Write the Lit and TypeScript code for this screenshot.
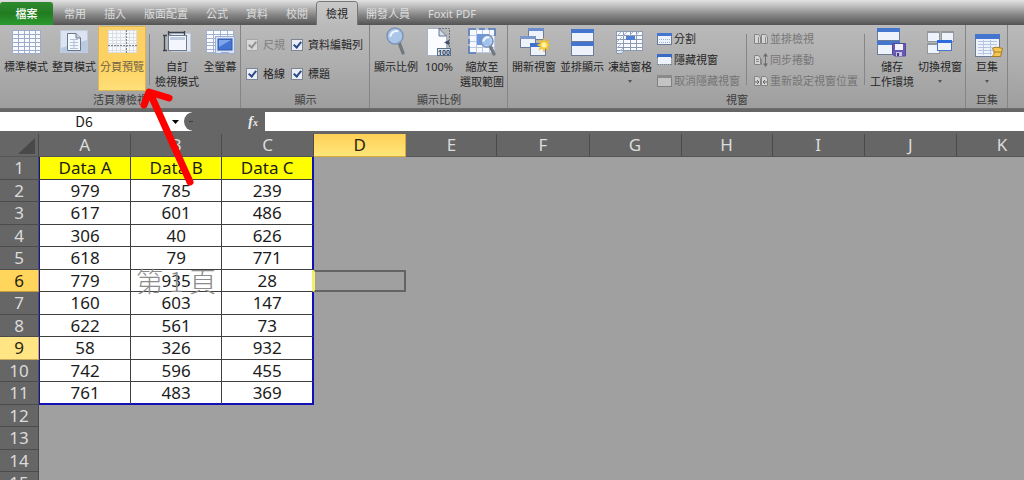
import { LitElement, html, svg, css, nothing } from "lit";
import { customElement, property, state } from "lit/decorators.js";
import { classMap } from "lit/directives/class-map.js";

// ---------- icon drawing helpers ----------

const win = (x: number, y: number, w: number, h: number, bar = 3, tone = "#3f72cf", line = "#6c7c96") => svg`
  <rect x=${x + 0.5} y=${y + 0.5} width=${w - 1} height=${h - 1} fill="#eef2fa" stroke=${line}></rect>
  <rect x=${x} y=${y} width=${w} height=${bar} fill=${tone}></rect>`;

const grid = (x: number, y: number, w: number, h: number, cols: number, rows: number, tone = "#7f93b4") => svg`
  <rect x=${x + 0.5} y=${y + 0.5} width=${w - 1} height=${h - 1} fill="#f8faff" stroke=${tone}></rect>
  ${Array.from({ length: cols - 1 }, (_, i) => {
    const p = Math.round(x + ((i + 1) * w) / cols) + 0.5;
    return svg`<path d="M${p} ${y}V${y + h}" stroke=${tone}></path>`;
  })}
  ${Array.from({ length: rows - 1 }, (_, i) => {
    const p = Math.round(y + ((i + 1) * h) / rows) + 0.5;
    return svg`<path d="M${x} ${p}H${x + w}" stroke=${tone}></path>`;
  })}`;

const lens = (cx: number, cy: number, r: number, ex: number, ey: number) => svg`
  <path d="M${cx + r * 0.5} ${cy + r * 0.8}L${ex} ${ey}" stroke="#74787f" stroke-width="3.4" stroke-linecap="round"></path>
  <circle cx=${cx} cy=${cy} r=${r} fill="#a9c9ee" fill-opacity=".85" stroke="#7c93b8" stroke-width="1.5"></circle>
  <path d="M${cx - r * 0.6} ${cy + r * 0.1}Q${cx - r * 0.4} ${cy - r * 0.7} ${cx + r * 0.4} ${cy - r * 0.6}" stroke="#eef6ff" stroke-width="2" fill="none"></path>`;

const bigIcons: Record<string, unknown> = {
  normal: svg`${grid(1, 2, 29, 24, 5, 6, "#9dadc8")}`,
  layout: svg`
    <rect x="1.500" y="2.500" width="27" height="22" fill="#dbe4f0" stroke="#c3ccda"></rect>
    <path d="M2 20L28 12V24H2Z" fill="#b9cbe2"></path>
    <path d="M8.500 5.500H17L21.500 10V22.500H8.500Z" fill="#f2f6fd" stroke="#6b7688"></path>
    <path d="M17 5.500V10H21.500" fill="#ccd8ea" stroke="#6b7688"></path>
    <path d="M11 11.500H19M11 14.500H19M11 17.500H19M11 20.500H19M15 11V21" stroke="#b3c1d8"></path>`,
  pagebreak: svg`${grid(1, 2, 29, 23, 7, 7, "#dcdfe2")}
    <path d="M19.500 2V25M1 17.500H30" stroke="#7d828a" stroke-dasharray="2 1"></path>`,
  custom: svg`
    <rect x="9.500" y="5.500" width="19" height="18" fill="#e3eaf5" stroke="#c2ccdc"></rect>
    <rect x="6.500" y="7.500" width="18" height="15" fill="#f3f6fc" stroke="#6f7a8f"></rect>
    <rect x="8" y="9" width="15" height="3" fill="#c0cce0"></rect>
    <path d="M6 4.500H23M6.500 3V7M22.500 3V7M2.500 7V22M1 7.500H5M1 22.500H5" stroke="#3c424c" stroke-width="1.300" fill="none"></path>`,
  full: svg`${grid(1, 2, 28, 23, 4, 6, "#a3b2cc")}
    <rect x="10.500" y="8.500" width="19" height="17" fill="#d7e3f7" stroke="#9badd0"></rect>
    <rect x="13" y="11" width="14" height="11" fill="#4474d2" stroke="#3159a8"></rect>
    <path d="M14 12H26L14 19Z" fill="#7fa6ec"></path><path d="M16 24.500H24" stroke="#9badd0"></path>`,
  zoom: svg`${lens(14, 8, 8, 22, 25)}`,
  hundred: svg`
    <path d="M3.500 .5H15L22.500 8V27.500H3.500Z" fill="#fbfcff" stroke="#a6b2c8"></path>
    <path d="M15 .5V8H22.500Z" fill="#d3dcea" stroke="#6c788f"></path>
    <path d="M15 .5H25.500V20" stroke="#6a7384" stroke-dasharray="2 1" fill="none"></path>
    <path d="M20 14.500L25 12V17Z" fill="#41506c"></path>
    <rect x="13.500" y="20.500" width="13" height="7" fill="#d6e3ef" stroke="#5b7089"></rect>
    <text x="20" y="27" text-anchor="middle" font-size="7" font-weight="700" fill="#33445c">100</text>`,
  zoomsel: svg`${grid(2, 1, 26, 24, 4, 4, "#b9c8e2")}
    <path d="M2 8V1H9M21 1H28V8M2 18V25H9M12 1H18M2 11V16" stroke="#5478b8" stroke-width="1.500" fill="none"></path>
    <rect x="10" y="6" width="12" height="11" fill="#6b96e2"></rect>
    ${lens(20, 13, 6, 27, 26)}`,
  newwin: svg`${win(9, 0, 16, 12, 3, "#6b8ccc")}${win(1, 8, 16, 12, 3, "#7c98cb")}${win(11, 15, 16, 13, 4, "#3f70cc")}
    <path d="M25 10L26.500 14L30 12L28.500 15.500L31 17L28.500 18.500L30 22L26.500 20L25 24L23.500 20L20 22L21.500 18.500L18 17L21.500 15.500L20 12L23.500 14Z" fill="#ffd23c" stroke="#e8b11c" stroke-width=".6"></path>
    <circle cx="25" cy="17" r="2.500" fill="#fff3a8"></circle>`,
  arrange: svg`${win(4, 1, 23, 13, 4, "#4476d0")}${win(4, 14, 23, 14, 4, "#4476d0")}`,
  freeze: svg`${grid(1, 3, 27, 20, 4, 5, "#8d9bb2")}
    <rect x="11" y="8" width="9" height="4" fill="#4f7ed2"></rect>
    <path d="M2 8L6 4M8 8L12 4M14 8L18 4M20 8L24 4M2 14L7 9M2 20L7 15M3 25L8 20" stroke="#a3b8dc"></path>
    <path d="M1.500 23V25.500H7L9 23" fill="#dbe5f4" stroke="#8d9bb2"></path>`,
  save: svg`${win(0, 0, 23, 13, 4, "#4476d0")}${win(0, 13, 23, 14, 4, "#4476d0")}
    <path d="M15.500 15.500H28.500V28H17.500L15.500 26Z" fill="#6a58b4" stroke="#54479a"></path>
    <rect x="18" y="16" width="8" height="6" fill="#f2f2fa"></rect>
    <rect x="19" y="24" width="6" height="4" fill="#c8c4e2"></rect><rect x="20" y="25" width="2" height="3" fill="#453789"></rect>`,
  switchwin: svg`${win(2, 3, 13, 11, 2, "#94979c", "#94979c")}${win(16, 3, 13, 11, 2, "#94979c", "#94979c")}
    ${win(2, 15, 13, 11, 2, "#94979c", "#94979c")}${win(12, 12, 15, 11, 3, "#2f6ade", "#4a75c4")}`,
  macro: svg`${win(3, 6, 25, 23, 5, "#4476d0")}
    <path d="M6 13.500H25M6 16.500H25M6 19.500H25M6 22.500H25M6 25.500H20M11.500 12V27M18.500 12V27" stroke="#b6c6e2"></path>
    <path d="M20.500 20.500Q23 18 30.500 20.500L28.500 28.500H20Q23 27 22 23Z" fill="#f5c755" stroke="#a87b1f"></path>
    <path d="M22 24H29" stroke="#a87b1f"></path>`,
};

const page = (x: number) => svg`<path d="M${x} 3.500H${x + 4}L${x + 6} 6V12.500H${x}Z" fill="#d5d5d5" stroke="#858585"></path>`;

const smallIcons: Record<string, unknown> = {
  split: svg`${win(0, 2, 15, 12, 3, "#4476d0")}<path d="M2 8.500H13M2 11.500H13" stroke="#9bb4de" stroke-dasharray="1 1"></path>`,
  hide: svg`<rect x="0" y="2" width="15" height="4" fill="#3a69c4"></rect><rect x="1" y="5" width="13" height="7" fill="#eef2fb"></rect>
    <path d="M.5 6V14M14.500 6V14M1 12.500H14" stroke="#7a879d" stroke-dasharray="1 1"></path>`,
  unhide: svg`${win(0, 2, 15, 12, 3, "#8a8a8a", "#808080")}<rect x="1" y="5" width="13" height="8" fill="#c3c3c3"></rect>`,
  side: svg`${page(1.5)}${page(8.5)}<path d="M5.500 6V12M12.500 6V12" stroke="#888"></path>`,
  sync: svg`${page(1.5)}<path d="M3 7.500H6M3 9.500H6M8.500 7V13" stroke="#888"></path>
    <path d="M12.500 1L15 4.500H10ZM12.500 15L15 11.500H10Z" fill="#6c6c6c"></path><path d="M12.500 4V12" stroke="#6c6c6c"></path>`,
  reset: svg`${page(1.5)}${page(8.5)}<path d="M2 9H6M4 7L6 9L4 11M14 9H10M12 7L10 9L12 11" stroke="#666" fill="none"></path>`,
};

// ---------- ribbon buttons ----------

@customElement("ribbon-button")
class RibbonButton extends LitElement {
  @property() icon = "";
  @property({ type: Array }) lines: string[] = [];
  @property({ type: Boolean }) menu = false;
  @property({ type: Boolean }) active = false;
  @property({ type: Boolean }) narrow = false;

  static styles = css`
    :host { display: block; }
    button {
      display: flex; flex-direction: column; align-items: center;
      box-sizing: border-box; width: 48px; height: 65px; padding: 2px 0 0;
      border: 0; background: none; color: #262626;
      font: 11px/15px "Noto Sans", "Noto Sans CJK TC", sans-serif; white-space: nowrap;
    }
    button.narrow { width: 38px; }
    button.active {
      background: linear-gradient(#fad068, #fdd262 60%, #ffe07a);
      box-shadow: inset 0 0 0 1px #dfb552; color: #6f6446;
    }
    svg { width: 30px; height: 28px; margin-bottom: 3px; overflow: visible; flex: none; }
    .caret { width: 0; margin-top: 6px; border: 2px solid transparent; border-top: 3px solid #555; border-bottom: 0; }
  `;

  render() {
    return html`<button type="button" class=${classMap({ active: this.active, narrow: this.narrow })} aria-pressed=${this.active}>
      <svg viewBox="0 0 30 28" fill="none" aria-hidden="true">${bigIcons[this.icon]}</svg>
      ${this.lines.map((l) => html`<span>${l}</span>`)}
      ${this.menu ? html`<span class="caret"></span>` : nothing}
    </button>`;
  }
}

@customElement("ribbon-item")
class RibbonItem extends LitElement {
  @property() icon = "";
  @property() label = "";
  @property({ type: Boolean }) off = false;

  static styles = css`
    :host { display: block; }
    button {
      display: flex; align-items: center; gap: 2px; height: 21px; padding: 0 3px;
      border: 0; background: none; color: #262626;
      font: 11px/15px "Noto Sans", "Noto Sans CJK TC", sans-serif; white-space: nowrap;
    }
    button:disabled { color: #757575; }
    svg { width: 15px; height: 16px; flex: none; }
  `;

  render() {
    return html`<button type="button" ?disabled=${this.off}>
      <svg viewBox="0 0 15 16" fill="none" aria-hidden="true">${smallIcons[this.icon]}</svg>${this.label}
    </button>`;
  }
}

// ---------- worksheet ----------

const columns = ["A", "B", "C", "D", "E", "F", "G", "H", "I", "J", "K"];
const data: (string | number)[][] = [
  ["Data A", "Data B", "Data C"],
  [979, 785, 239],
  [617, 601, 486],
  [306, 40, 626],
  [618, 79, 771],
  [779, 935, 28],
  [160, 603, 147],
  [622, 561, 73],
  [58, 326, 932],
  [742, 596, 455],
  [761, 483, 369],
];

@customElement("work-sheet")
class WorkSheet extends LitElement {
  static styles = css`
    :host { display: block; overflow: hidden; background: #a0a0a0; }
    table {
      width: 1048px; table-layout: fixed; border-collapse: separate; border-spacing: 0;
      font: 17px/20px "Noto Sans", "Noto Sans CJK TC", sans-serif; color: #1c1c1c; text-align: center;
    }
    col { width: 92px; }
    col:nth-child(3n) { width: 91px; }
    col.rows { width: 39px; }
    tr { height: 23px; }
    tbody tr:nth-child(even) { height: 22px; }
    th, td { box-sizing: border-box; height: inherit; padding: 0; }
    th { background: #666; color: #dcdcdc; font-weight: 400; border: 0 solid #4b4b4b; border-width: 0 1px 1px 0; }
    thead th { border-bottom-color: #555; }
    thead th.picked { background: linear-gradient(#ffd058, #ffe679); color: #2b2410; border-color: #d8a93c; }
    tbody th.picked { background: #ffd55c; color: #2b2410; border-color: #c49a39; }
    tbody th.near { background: #ffe583; color: #2b2410; border-color: #c4a95a; }
    .corner svg { display: block; width: 18px; height: 16px; margin: 2px 2px 0 auto; }
    .cell { background: #fff; border: 0 solid #3f3f3f; border-width: 0 1px 1px 0; }
    .title { background: #ff0; }
    .first { border-left: 1px solid #1515a8; }
    .last { border-right: 2px solid #1010b4; }
    .bottom { border-bottom: 2px solid #1010b4; }
    .beside { border-right-color: #f4f06a; }
    .selected { border: 2px solid #646464; border-left: 1px solid #f4f06a; }
    .marked { position: relative; }
    .mark {
      position: absolute; inset: 0; display: flex; align-items: center; justify-content: center;
      font: 200 27px/27px "Noto Sans CJK TC", sans-serif; color: #8c8c8c; white-space: nowrap;
    }
  `;

  private cell(r: number, c: number) {
    if (r < data.length && c < 3) {
      const cls = classMap({
        cell: true, title: r === 0, first: c === 0, last: c === 2,
        bottom: r === data.length - 1, beside: r === 5 && c === 2, marked: r === 5 && c === 1,
      });
      return html`<td class=${cls}>${data[r][c]}${r === 5 && c === 1 ? html`<span class="mark">第 1 頁</span>` : nothing}</td>`;
    }
    return html`<td class=${classMap({ selected: r === 5 && c === 3 })}></td>`;
  }

  render() {
    return html`<table>
      <colgroup><col class="rows" />${columns.map(() => html`<col />`)}</colgroup>
      <thead><tr>
        <th class="corner"><svg viewBox="0 0 18 16" aria-hidden="true"><path d="M17 0V16H0Z" fill="#494949"></path></svg></th>
        ${columns.map((c) => html`<th scope="col" class=${classMap({ picked: c === "D" })}>${c}</th>`)}
      </tr></thead>
      <tbody>${Array.from({ length: 15 }, (_, r) => html`<tr>
        <th scope="row" class=${classMap({ picked: r === 5, near: r === 8 })}>${r + 1}</th>
        ${columns.map((_, c) => this.cell(r, c))}
      </tr>`)}</tbody>
    </table>`;
  }
}

// ---------- application ----------

@customElement("app-root")
class AppRoot extends LitElement {
  @state() private tab = "檢視";

  static styles = css`
    :host {
      display: flex; flex-direction: column; position: relative; height: 100vh; overflow: hidden;
      background: #a0a0a0; font: 11px/15px "Noto Sans", "Noto Sans CJK TC", sans-serif; color: #262626;
    }
    .tabs {
      display: flex; align-items: stretch; flex: none; height: 23px; padding-top: 2px;
      background: linear-gradient(#e2e2e2, #bdbdbd 25%, #858585 60%, #545454);
    }
    .tab { border: 0; padding: 0 9px; background: none; color: #dedede; font: inherit; white-space: nowrap; }
    .tab.file {
      width: 53px; margin-right: 2px; border-radius: 3px 3px 0 0; color: #fff; font-weight: 500;
      background: linear-gradient(#2f8a2d, #227c22 50%, #2c9a2e);
    }
    .tab.on { background: linear-gradient(#c9c9c9, #bababa); color: #262626; border-radius: 3px 3px 0 0; box-shadow: 0 0 0 1px #777; clip-path: inset(-1px -1px 0 -1px); }
    .ribbon {
      display: flex; flex: none; border-bottom: 1px solid #6d6d6d;
      background: linear-gradient(#bababa, #adadad 50%, #9e9e9e);
    }
    .group { display: flex; flex-direction: column; padding: 1px 1px 0 2px; border-right: 1px solid #858585; }
    .body { display: flex; height: 65px; }
    .caption { line-height: 17px; text-align: center; color: #3c3c3c; }
    .rule { width: 1px; margin: 8px 3px 6px; background: #868686; }
    .stack { padding-top: 2px; }
    .checks { display: grid; grid-template-columns: auto auto; grid-auto-rows: 29px; column-gap: 6px; padding: 4px 5px 0 3px; box-sizing: border-box; }
    .check { display: flex; align-items: center; gap: 5px; white-space: nowrap; }
    .check input {
      appearance: none; box-sizing: border-box; width: 12px; height: 12px; margin: 0;
      border: 1px solid #7d8591; background: #e9eef6; display: grid; place-items: center;
    }
    .check input:checked::after {
      content: ""; width: 3px; height: 6px; margin-bottom: 2px; border: solid #2b4a86; border-width: 0 2px 2px 0; transform: rotate(40deg);
    }
    .check.off { color: #808080; }
    .check.off input { border-color: #a5a5a5; background: #d8d8d8; }
    .check.off input::after { border-color: #909090; }
    .formula { display: flex; flex: none; height: 19px; padding: 3px 0; background: #666; }
    .formula input { border: 0; padding: 0; margin: 0; min-width: 0; background: #fff; font: inherit; color: #1b1b1b; outline: 0; }
    .formula .name { width: 168px; font-family: "Noto Sans CJK TC", sans-serif; font-size: 14px; text-align: center; }
    .drop { width: 24px; margin-right: -8px; border: 0; padding: 0 10px 0 0; background: #fff; display: flex; align-items: center; justify-content: center; }
    .drop svg { width: 7px; height: 4px; }
    .fx { display: flex; align-items: center; justify-content: space-between; width: 81px; box-sizing: border-box; padding: 0 7px 0 5px; border-radius: 10px 0 0 10px; background: #666; color: #eee; font: italic 700 14px/19px "Liberation Serif", serif; }
    .fx i { width: 4px; height: 1px; background: #3e3e3e; }
    .fx small { font-size: 10px; }
    .formula .value { flex: 1; }
    work-sheet { flex: 1; }
    .pointer { position: absolute; left: 138px; top: 84px; width: 62px; height: 106px; pointer-events: none; }
  `;

  private tabButton(name: string) {
    return html`<button type="button" class=${classMap({ tab: true, on: this.tab === name })} @click=${() => (this.tab = name)}>${name}</button>`;
  }

  private check(label: string, off = false) {
    return html`<label class=${classMap({ check: true, off })}><input type="checkbox" checked ?disabled=${off} />${label}</label>`;
  }

  private big(icon: string, lines: string[], opts: { menu?: boolean; active?: boolean; narrow?: boolean } = {}) {
    return html`<ribbon-button .icon=${icon} .lines=${lines} .menu=${!!opts.menu} .active=${!!opts.active} .narrow=${!!opts.narrow}></ribbon-button>`;
  }

  private item(icon: string, label: string, off = false) {
    return html`<ribbon-item .icon=${icon} .label=${label} .off=${off}></ribbon-item>`;
  }

  render() {
    return html`
      <nav class="tabs">
        <button type="button" class="tab file">檔案</button>
        ${["常用", "插入", "版面配置", "公式", "資料", "校閱", "檢視", "開發人員", "Foxit PDF"].map((t) => this.tabButton(t))}
      </nav>
      <div class="ribbon">
        <section class="group">
          <div class="body">
            ${this.big("normal", ["標準模式"])}${this.big("layout", ["整頁模式"])}
            ${this.big("pagebreak", ["分頁預覽"], { active: true })}
            <span class="rule"></span>
            ${this.big("custom", ["自訂", "檢視模式"])}${this.big("full", ["全螢幕"], { narrow: true })}
          </div>
          <div class="caption">活頁簿檢視</div>
        </section>
        <section class="group">
          <div class="body checks">
            ${this.check("尺規", true)}${this.check("資料編輯列")}${this.check("格線")}${this.check("標題")}
          </div>
          <div class="caption">顯示</div>
        </section>
        <section class="group">
          <div class="body">
            ${this.big("zoom", ["顯示比例"])}${this.big("hundred", ["100%"], { narrow: true })}${this.big("zoomsel", ["縮放至", "選取範圍"])}
          </div>
          <div class="caption">顯示比例</div>
        </section>
        <section class="group">
          <div class="body">
            ${this.big("newwin", ["開新視窗"])}${this.big("arrange", ["並排顯示"])}${this.big("freeze", ["凍結窗格"], { menu: true })}
            <div class="stack">${this.item("split", "分割")}${this.item("hide", "隱藏視窗")}${this.item("unhide", "取消隱藏視窗", true)}</div>
            <span class="rule"></span>
            <div class="stack">${this.item("side", "並排檢視", true)}${this.item("sync", "同步捲動", true)}${this.item("reset", "重新設定視窗位置", true)}</div>
            <span class="rule"></span>
            ${this.big("save", ["儲存", "工作環境"])}${this.big("switchwin", ["切換視窗"], { menu: true })}
          </div>
          <div class="caption">視窗</div>
        </section>
        <section class="group">
          <div class="body">${this.big("macro", ["巨集"], { menu: true, narrow: true })}</div>
          <div class="caption">巨集</div>
        </section>
      </div>
      <div class="formula">
        <input class="name" aria-label="名稱方塊" value="D6" />
        <button type="button" class="drop" aria-label="名稱清單"><svg viewBox="0 0 7 4"><path d="M0 0H7L3.500 4Z"></path></svg></button>
        <label class="fx" for="value"><i></i><span>f<small>x</small></span></label>
        <input class="value" id="value" />
      </div>
      <work-sheet></work-sheet>
      <svg class="pointer" viewBox="138 84 62 106" aria-hidden="true">
        <path d="M190 182L150 93M144 105L149 92L169 98" fill="none" stroke="#f00" stroke-width="7" stroke-linecap="round" stroke-linejoin="round"></path>
      </svg>`;
  }
}
